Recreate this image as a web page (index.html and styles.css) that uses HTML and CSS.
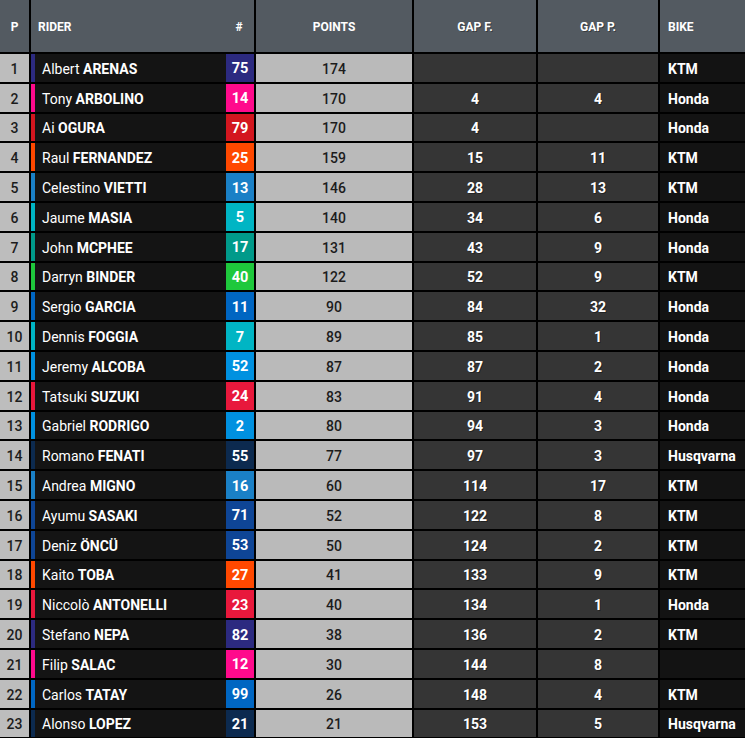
FILE: index.html
```html
<!DOCTYPE html>
<html>
<head>
<meta charset="utf-8">
<link rel="stylesheet" href="styles.css">
</head>
<body>
<div class="table">
  <div class="row head">
    <div class="c pos">P</div>
    <div class="c rider"><span class="hname">RIDER</span><span class="hnum">#</span></div>
    <div class="c pts">POINTS</div>
    <div class="c gap">GAP F.</div>
    <div class="c gap">GAP P.</div>
    <div class="c bike">BIKE</div>
  </div>
  <div class="row"><div class="c pos">1</div><div class="c rider indigo"><span class="name">Albert <b>ARENAS</b></span><span class="num">75</span></div><div class="c pts">174</div><div class="c gap"></div><div class="c gap"></div><div class="c bike">KTM</div></div>
  <div class="row"><div class="c pos">2</div><div class="c rider magenta"><span class="name">Tony <b>ARBOLINO</b></span><span class="num">14</span></div><div class="c pts">170</div><div class="c gap">4</div><div class="c gap">4</div><div class="c bike">Honda</div></div>
  <div class="row"><div class="c pos">3</div><div class="c rider red"><span class="name">Ai <b>OGURA</b></span><span class="num">79</span></div><div class="c pts">170</div><div class="c gap">4</div><div class="c gap"></div><div class="c bike">Honda</div></div>
  <div class="row"><div class="c pos">4</div><div class="c rider orange"><span class="name">Raul <b>FERNANDEZ</b></span><span class="num">25</span></div><div class="c pts">159</div><div class="c gap">15</div><div class="c gap">11</div><div class="c bike">KTM</div></div>
  <div class="row"><div class="c pos">5</div><div class="c rider sky"><span class="name">Celestino <b>VIETTI</b></span><span class="num">13</span></div><div class="c pts">146</div><div class="c gap">28</div><div class="c gap">13</div><div class="c bike">KTM</div></div>
  <div class="row"><div class="c pos">6</div><div class="c rider cyan"><span class="name">Jaume <b>MASIA</b></span><span class="num">5</span></div><div class="c pts">140</div><div class="c gap">34</div><div class="c gap">6</div><div class="c bike">Honda</div></div>
  <div class="row"><div class="c pos">7</div><div class="c rider teal"><span class="name">John <b>MCPHEE</b></span><span class="num">17</span></div><div class="c pts">131</div><div class="c gap">43</div><div class="c gap">9</div><div class="c bike">Honda</div></div>
  <div class="row"><div class="c pos">8</div><div class="c rider green"><span class="name">Darryn <b>BINDER</b></span><span class="num">40</span></div><div class="c pts">122</div><div class="c gap">52</div><div class="c gap">9</div><div class="c bike">KTM</div></div>
  <div class="row"><div class="c pos">9</div><div class="c rider blue"><span class="name">Sergio <b>GARCIA</b></span><span class="num">11</span></div><div class="c pts">90</div><div class="c gap">84</div><div class="c gap">32</div><div class="c bike">Honda</div></div>
  <div class="row"><div class="c pos">10</div><div class="c rider cyan"><span class="name">Dennis <b>FOGGIA</b></span><span class="num">7</span></div><div class="c pts">89</div><div class="c gap">85</div><div class="c gap">1</div><div class="c bike">Honda</div></div>
  <div class="row"><div class="c pos">11</div><div class="c rider azure"><span class="name">Jeremy <b>ALCOBA</b></span><span class="num">52</span></div><div class="c pts">87</div><div class="c gap">87</div><div class="c gap">2</div><div class="c bike">Honda</div></div>
  <div class="row"><div class="c pos">12</div><div class="c rider crimson"><span class="name">Tatsuki <b>SUZUKI</b></span><span class="num">24</span></div><div class="c pts">83</div><div class="c gap">91</div><div class="c gap">4</div><div class="c bike">Honda</div></div>
  <div class="row"><div class="c pos">13</div><div class="c rider azure"><span class="name">Gabriel <b>RODRIGO</b></span><span class="num">2</span></div><div class="c pts">80</div><div class="c gap">94</div><div class="c gap">3</div><div class="c bike">Honda</div></div>
  <div class="row"><div class="c pos">14</div><div class="c rider navy"><span class="name">Romano <b>FENATI</b></span><span class="num">55</span></div><div class="c pts">77</div><div class="c gap">97</div><div class="c gap">3</div><div class="c bike">Husqvarna</div></div>
  <div class="row"><div class="c pos">15</div><div class="c rider sky"><span class="name">Andrea <b>MIGNO</b></span><span class="num">16</span></div><div class="c pts">60</div><div class="c gap">114</div><div class="c gap">17</div><div class="c bike">KTM</div></div>
  <div class="row"><div class="c pos">16</div><div class="c rider royal"><span class="name">Ayumu <b>SASAKI</b></span><span class="num">71</span></div><div class="c pts">52</div><div class="c gap">122</div><div class="c gap">8</div><div class="c bike">KTM</div></div>
  <div class="row"><div class="c pos">17</div><div class="c rider royal"><span class="name">Deniz <b>ÖNCÜ</b></span><span class="num">53</span></div><div class="c pts">50</div><div class="c gap">124</div><div class="c gap">2</div><div class="c bike">KTM</div></div>
  <div class="row"><div class="c pos">18</div><div class="c rider orange"><span class="name">Kaito <b>TOBA</b></span><span class="num">27</span></div><div class="c pts">41</div><div class="c gap">133</div><div class="c gap">9</div><div class="c bike">KTM</div></div>
  <div class="row"><div class="c pos">19</div><div class="c rider crimson"><span class="name">Niccolò <b>ANTONELLI</b></span><span class="num">23</span></div><div class="c pts">40</div><div class="c gap">134</div><div class="c gap">1</div><div class="c bike">Honda</div></div>
  <div class="row"><div class="c pos">20</div><div class="c rider indigo"><span class="name">Stefano <b>NEPA</b></span><span class="num">82</span></div><div class="c pts">38</div><div class="c gap">136</div><div class="c gap">2</div><div class="c bike">KTM</div></div>
  <div class="row"><div class="c pos">21</div><div class="c rider magenta"><span class="name">Filip <b>SALAC</b></span><span class="num">12</span></div><div class="c pts">30</div><div class="c gap">144</div><div class="c gap">8</div><div class="c bike"></div></div>
  <div class="row"><div class="c pos">22</div><div class="c rider blue"><span class="name">Carlos <b>TATAY</b></span><span class="num">99</span></div><div class="c pts">26</div><div class="c gap">148</div><div class="c gap">4</div><div class="c bike">KTM</div></div>
  <div class="row"><div class="c pos">23</div><div class="c rider navy"><span class="name">Alonso <b>LOPEZ</b></span><span class="num">21</span></div><div class="c pts">21</div><div class="c gap">153</div><div class="c gap">5</div><div class="c bike">Husqvarna</div></div>
</div>
</body>
</html>
```
FILE: styles.css
```css
html, body {
  margin: 0;
  padding: 0;
  background: #000;
}
body {
  font-family: Roboto, "Liberation Sans", sans-serif;
  font-size: 14px;
  color: #fff;
}
.table {
  display: flex;
  flex-direction: column;
  gap: 2px;
  width: 745px;
}
.row {
  display: grid;
  grid-template-columns: 29px 223px 156px 122px 120px 85px;
  column-gap: 2px;
  height: 27.8px;
}
.row.head {
  height: 52px;
}
.c {
  display: flex;
  align-items: center;
  justify-content: center;
  font-weight: 700;
  min-width: 0;
  padding-top: 2px;
  box-sizing: border-box;
}
.head .c {
  background: #535a61;
  color: #fff;
  font-size: 12px;
  font-weight: 700;
  padding-top: 1px;
}
.pos {
  background: #bdbdbd;
  color: #1c1c1c;
  font-weight: 500;
}
.pts {
  background: #bababa;
  color: #1c1c1c;
  font-weight: 500;
}
.gap {
  background: #353535;
  color: #fff;
  text-shadow: 1px 1px 0 rgba(0, 0, 0, 0.35);
}
.bike {
  background: #131313;
  justify-content: flex-start;
  padding-left: 8px;
}
.rider {
  background: #141414;
  justify-content: space-between;
  border-left: 4px solid transparent;
  align-items: stretch;
  padding-top: 0;
}
.head .rider {
  border-left: 0;
  padding-left: 7px;
  justify-content: space-between;
  align-items: center;
}
.head .bike {
  justify-content: flex-start;
  padding-left: 8px;
}
.hnum {
  width: 30px;
  text-align: center;
}
.name {
  display: flex;
  align-items: center;
  padding-left: 7px;
  padding-top: 2px;
  font-weight: 400;
  white-space: pre;
}
.name b {
  font-weight: 700;
}
.num {
  width: 28px;
  display: flex;
  align-items: center;
  justify-content: center;
  padding-top: 2px;
  font-weight: 700;
  font-size: 14.5px;
}
.indigo { border-left-color: #2c2a80; }
.indigo .num { background: #2c2a80; }
.magenta { border-left-color: #ff0a8c; }
.magenta .num { background: #ff0a8c; }
.red { border-left-color: #d3161f; }
.red .num { background: #d3161f; }
.orange { border-left-color: #ff4800; }
.orange .num { background: #ff4800; }
.sky { border-left-color: #1a80c6; }
.sky .num { background: #1a80c6; }
.cyan { border-left-color: #00b5c4; }
.cyan .num { background: #00b5c4; }
.teal { border-left-color: #009a8a; }
.teal .num { background: #009a8a; }
.green { border-left-color: #1ec83c; }
.green .num { background: #1ec83c; }
.blue { border-left-color: #0066c2; }
.blue .num { background: #0066c2; }
.azure { border-left-color: #0091e0; }
.azure .num { background: #0091e0; }
.crimson { border-left-color: #e8183c; }
.crimson .num { background: #e8183c; }
.navy { border-left-color: #0c2a4f; }
.navy .num { background: #0c2a4f; }
.royal { border-left-color: #0e4596; }
.royal .num { background: #0e4596; }
```
